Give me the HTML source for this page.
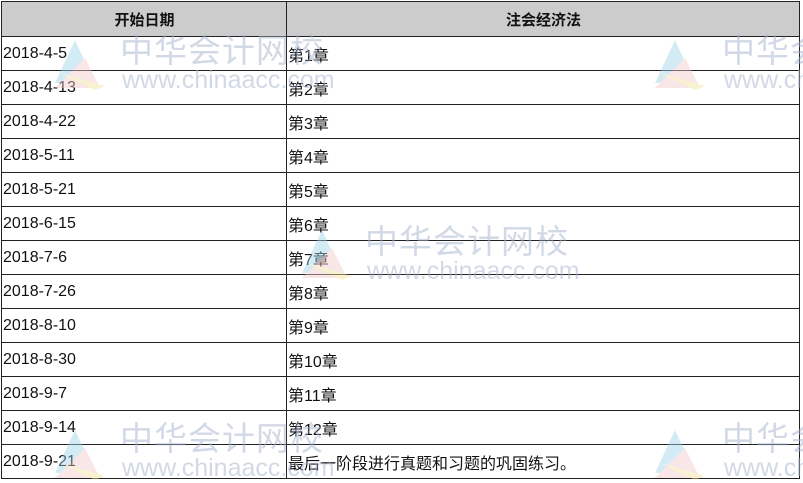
<!DOCTYPE html>
<html><head><meta charset="utf-8"><style>
body{margin:0;width:803px;height:483px;background:#fff;overflow:hidden;position:relative;font-family:"Liberation Sans","Noto Sans CJK SC",sans-serif;}
table{position:absolute;left:1px;top:1px;border-collapse:collapse;width:799px;}
td,th{border:1px solid #222;height:33px;padding:0 0 0 1px;font-size:16px;color:#111;text-align:left;vertical-align:middle;}
th{background:#cccccc;text-align:center;font-weight:bold;height:34px;font-size:15px;}
.wm{position:absolute;color:rgba(165,180,205,0.5);pointer-events:none;white-space:nowrap;}
.wm .c{font-size:33px;letter-spacing:1px;line-height:32px;}
.wm .u{font-size:25px;line-height:26px;margin-left:2px;}
.logo{position:absolute;opacity:.45}
</style></head><body>
<table>
<tr><th style="width:283px">开始日期</th><th>注会经济法</th></tr>
<tr><td>2018-4-5</td><td>第1章</td></tr>
<tr><td>2018-4-13</td><td>第2章</td></tr>
<tr><td>2018-4-22</td><td>第3章</td></tr>
<tr><td>2018-5-11</td><td>第4章</td></tr>
<tr><td>2018-5-21</td><td>第5章</td></tr>
<tr><td>2018-6-15</td><td>第6章</td></tr>
<tr><td>2018-7-6</td><td>第7章</td></tr>
<tr><td>2018-7-26</td><td>第8章</td></tr>
<tr><td>2018-8-10</td><td>第9章</td></tr>
<tr><td>2018-8-30</td><td>第10章</td></tr>
<tr><td>2018-9-7</td><td>第11章</td></tr>
<tr><td>2018-9-14</td><td>第12章</td></tr>
<tr><td>2018-9-21</td><td>最后一阶段进行真题和习题的巩固练习。</td></tr>
</table>
<div class="wm" style="left:120px;top:35px"><div class="c">中华会计网校</div><div class="u">www.chinaacc.com</div></div>
<div class="wm" style="left:365px;top:226px"><div class="c">中华会计网校</div><div class="u">www.chinaacc.com</div></div>
<div class="wm" style="left:120px;top:423px"><div class="c">中华会计网校</div><div class="u">www.chinaacc.com</div></div>
<div class="wm" style="left:722px;top:35px"><div class="c">中华会计网校</div><div class="u">www.chinaacc.com</div></div>
<div class="wm" style="left:722px;top:423px"><div class="c">中华会计网校</div><div class="u">www.chinaacc.com</div></div>
<svg class="logo" style="left:35px;top:38px" width="80" height="55"><path d="M40 2 L20 45 L60 45 Z" fill="#9fd3ea"/><path d="M50 20 L65 50 L20 50 Z" fill="#f3c9c9"/><path d="M25 35 L70 48 L60 52 Z" fill="#f3e39a"/></svg>
<svg class="logo" style="left:282px;top:228px" width="80" height="55"><path d="M40 2 L20 45 L60 45 Z" fill="#9fd3ea"/><path d="M50 20 L65 50 L20 50 Z" fill="#f3c9c9"/><path d="M25 35 L70 48 L60 52 Z" fill="#f3e39a"/></svg>
<svg class="logo" style="left:35px;top:428px" width="80" height="55"><path d="M40 2 L20 45 L60 45 Z" fill="#9fd3ea"/><path d="M50 20 L65 50 L20 50 Z" fill="#f3c9c9"/><path d="M25 35 L70 48 L60 52 Z" fill="#f3e39a"/></svg>
<svg class="logo" style="left:635px;top:38px" width="80" height="55"><path d="M40 2 L20 45 L60 45 Z" fill="#9fd3ea"/><path d="M50 20 L65 50 L20 50 Z" fill="#f3c9c9"/><path d="M25 35 L70 48 L60 52 Z" fill="#f3e39a"/></svg>
<svg class="logo" style="left:635px;top:428px" width="80" height="55"><path d="M40 2 L20 45 L60 45 Z" fill="#9fd3ea"/><path d="M50 20 L65 50 L20 50 Z" fill="#f3c9c9"/><path d="M25 35 L70 48 L60 52 Z" fill="#f3e39a"/></svg>
</body></html>
